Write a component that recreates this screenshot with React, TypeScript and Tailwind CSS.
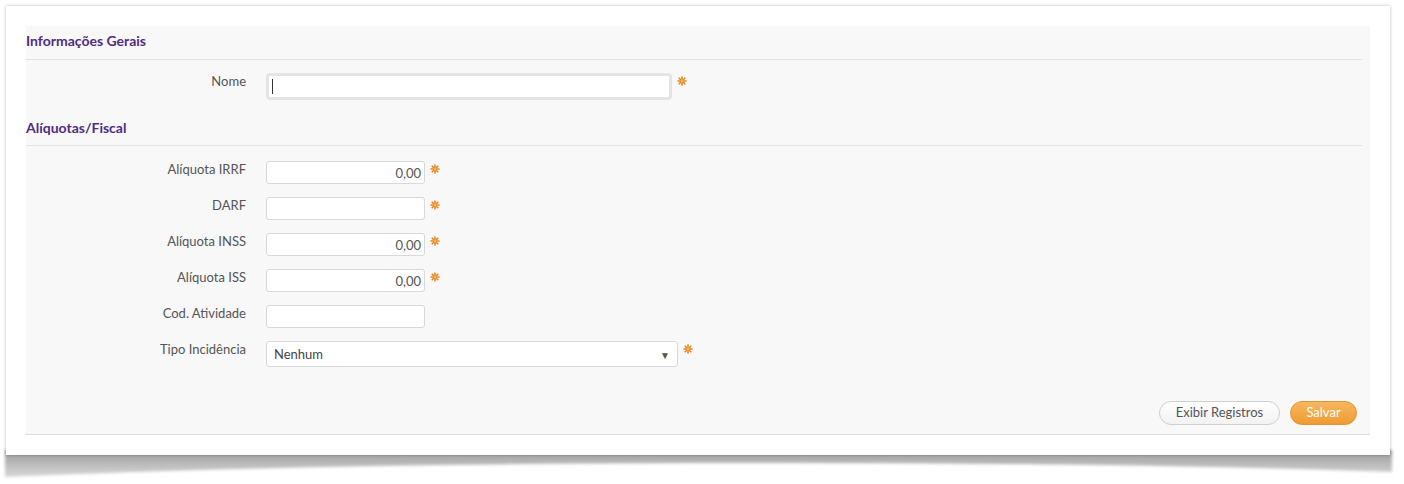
import React from "react";

const font = { fontFamily: "Lato, 'Open Sans', sans-serif" };

function Required() {
  return (
    <svg width="10" height="10" viewBox="0 0 10 10" className="mt-[3px] ml-[5px] shrink-0">
      <g stroke="#e8841c" strokeWidth="1.6" strokeLinecap="round">
        <line x1="5" y1="1" x2="5" y2="9" />
        <line x1="1" y1="5" x2="9" y2="5" />
        <line x1="2.2" y1="2.2" x2="7.8" y2="7.8" />
        <line x1="7.8" y1="2.2" x2="2.2" y2="7.8" />
      </g>
      <circle cx="5" cy="5" r="1.4" fill="#f6b45a" />
    </svg>
  );
}

function SectionTitle({ children, className = "" }: { children: React.ReactNode; className?: string }) {
  return (
    <div className={`mr-[8px] flex items-center border-b border-[#e3e3e3] text-[14px] leading-[18px] font-bold text-[#4f2d7f] ${className}`}>
      {children}
    </div>
  );
}

function Row({
  label,
  children,
  className = "",
}: {
  label: string;
  children: React.ReactNode;
  className?: string;
}) {
  return (
    <div className={`flex items-start ${className}`}>
      <div className="w-[220px] text-right text-[13px] leading-[16px] text-[#555]">{label}</div>
      <div className="ml-[20px] flex items-start">{children}</div>
    </div>
  );
}

function NumberInput({ value, required }: { value?: string; required?: boolean }) {
  return (
    <>
      <div className="flex h-[23px] w-[159px] items-center justify-end rounded-[3px] border border-[#d8d8d8] bg-white px-[3px] pt-[3px] text-[13px] text-[#555]">
        {value}
      </div>
      {required ? <Required /> : null}
    </>
  );
}

export default function App() {
  return (
    <div className="relative h-[484px] w-[1404px] overflow-hidden bg-white pl-[6px] pt-[6px]" style={font}>
      <svg className="absolute left-0 top-0" width="1404" height="484">
        <defs>
          <linearGradient id="sh" x1="0" y1="0" x2="0" y2="1">
            <stop offset="0" stopColor="#9a9a9a" />
            <stop offset="1" stopColor="#d8d8d8" />
          </linearGradient>
          <filter id="bl" x="-5%" y="-50%" width="110%" height="200%">
            <feGaussianBlur stdDeviation="1.6" />
          </filter>
        </defs>
        <path
          d="M5 450 L1392 450 L1392 472 Q1100 462 700 463 Q300 464 5 477 Z"
          fill="url(#sh)"
          filter="url(#bl)"
        />
      </svg>
      <div className="relative h-[449px] w-[1384px] bg-white p-[20px] shadow-[0_0_3px_rgba(0,0,0,0.28)]">
        <div className="flex h-[409px] w-[1344px] flex-col border-b border-[#dcdcdc] bg-[#f8f8f8]">
          <SectionTitle className="h-[34px] pb-[4px]">Informações Gerais</SectionTitle>

          <Row label="Nome" className="mt-[13px]">
            <div className="h-[27px] w-[406px] rounded-[4px] border-[3px] border-[#e4e4e4] bg-white">
              <div className="ml-[3px] mt-[3px] h-[15px] w-px bg-[#333]" />
            </div>
            <Required />
          </Row>

          <SectionTitle className="mt-[12px] h-[34px] pb-[2px]">Alíquotas/Fiscal</SectionTitle>

          <div className="mt-[15px] flex flex-col gap-[13px]">
            <Row label="Alíquota IRRF">
              <NumberInput value="0,00" required />
            </Row>
            <Row label="DARF">
              <NumberInput required />
            </Row>
            <Row label="Alíquota INSS">
              <NumberInput value="0,00" required />
            </Row>
            <Row label="Alíquota ISS">
              <NumberInput value="0,00" required />
            </Row>
            <Row label="Cod. Atividade">
              <NumberInput />
            </Row>
            <Row label="Tipo Incidência">
              <div className="flex h-[26px] w-[412px] items-center justify-between rounded-[3px] border border-[#d8d8d8] bg-white pl-[7px] pr-[7px] pt-[2px] text-[13px] text-[#444]">
                <span>Nenhum</span>
                <span className="text-[10px] text-[#555]">▼</span>
              </div>
              <Required />
            </Row>
          </div>

          <div className="mt-auto flex justify-end gap-[10px] pb-[9px] pr-[13px]">
            <button className="h-[24px] w-[121px] rounded-full border border-[#cfcfcf] bg-gradient-to-b from-white to-[#f2f2f2] text-[13px] text-[#555]">
              Exibir Registros
            </button>
            <button className="h-[24px] w-[67px] rounded-full border border-[#e3952f] bg-gradient-to-b from-[#f6b85f] to-[#ef9a30] text-[13px] text-white">
              Salvar
            </button>
          </div>
        </div>
      </div>
    </div>
  );
}
